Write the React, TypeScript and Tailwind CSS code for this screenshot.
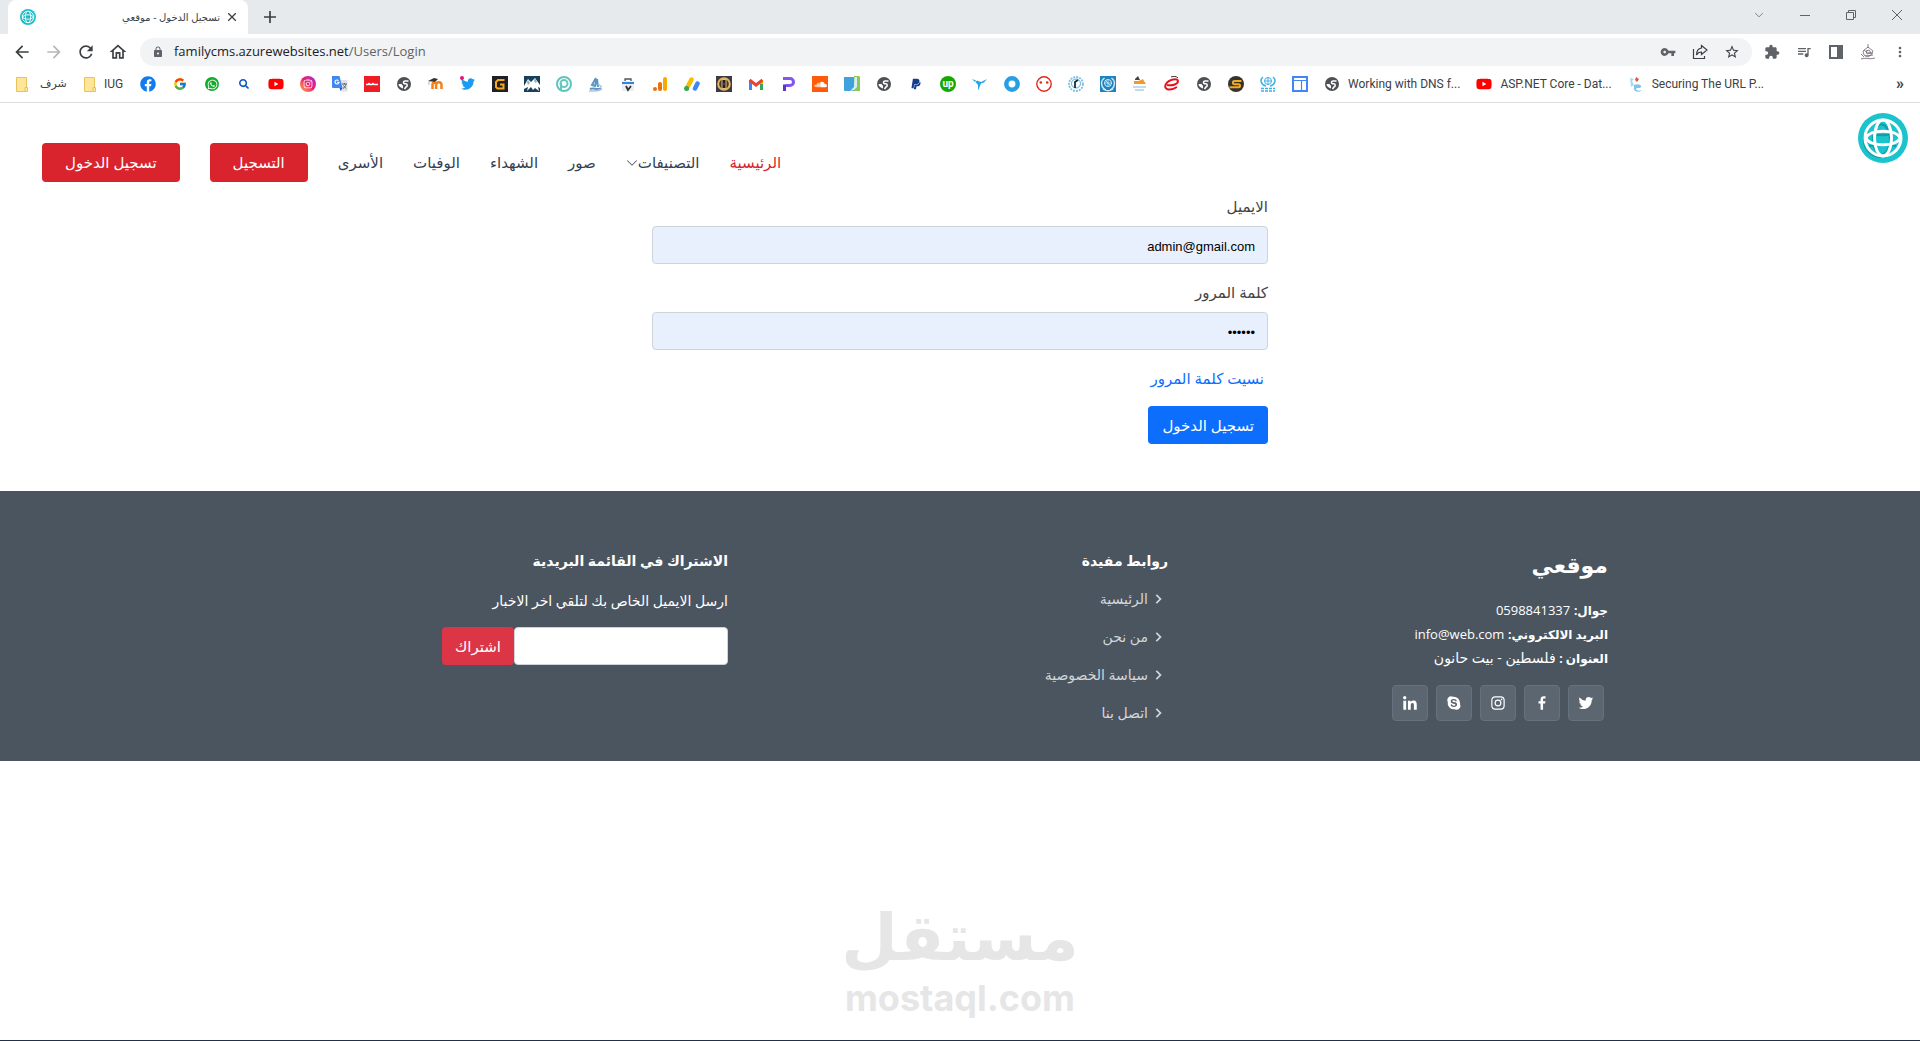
import {
  BiChevronRight,
  BiLogoFacebook,
  BiLogoInstagram,
  BiLogoLinkedin,
  BiLogoSkype,
  BiLogoTwitter,
} from "react-icons/bi";
import { BsChevronDown } from "react-icons/bs";
import {
  MdArrowBack,
  MdArrowForward,
  MdExtension,
  MdLock,
  MdMoreVert,
  MdOutlineHome,
  MdOutlineQueueMusic,
  MdRefresh,
  MdStarOutline,
  MdVpnKey,
} from "react-icons/md";
import {
  FaFacebook,
  FaInstagram,
  FaPaypal,
  FaSearch,
  FaSoundcloud,
  FaTwitter,
  FaWhatsapp,
  FaYoutube,
} from "react-icons/fa";
import { FcGoogle } from "react-icons/fc";

type FooterLink = { id: number; label: string };

const footerLinks: FooterLink[] = [
  { id: 1, label: "الرئيسية" },
  { id: 2, label: "من نحن" },
  { id: 3, label: "سياسة الخصوصية" },
  { id: 4, label: "اتصل بنا" },
];

const navLinks = ["صور", "الشهداء", "الوفيات", "الأسرى"];

const socials = [
  { name: "Twitter", icon: BiLogoTwitter },
  { name: "Facebook", icon: BiLogoFacebook },
  { name: "Instagram", icon: BiLogoInstagram },
  { name: "Skype", icon: BiLogoSkype },
  { name: "LinkedIn", icon: BiLogoLinkedin },
];

const SiteLogo = ({ className }: { className: string }) => (
  <svg viewBox="0 0 50 50" className={className} aria-hidden="true">
    <circle cx="25" cy="25" r="25" fill="#1bc4cd" />
    <circle cx="23" cy="27" r="18" fill="#0f9ea8" />
    <circle cx="25" cy="25" r="17" fill="#1bc4cd" />
    <g fill="none" stroke="#0f9ea8" strokeWidth="2">
      <ellipse cx="23.500" cy="26.500" rx="8.500" ry="15" />
      <path d="M10 19.500c8 3.500 22 3.500 29 0M10 33.500c8-3.500 22-3.500 28 0" />
    </g>
    <g fill="none" stroke="#fff" strokeWidth="3">
      <circle cx="25" cy="25" r="18" />
      <ellipse cx="25" cy="25" rx="8.500" ry="18" />
      <path d="M8 25c3-9 31-9 34 0M8 25c3 9 31 9 34 0" />
    </g>
  </svg>
);

const Folder = () => (
  <svg viewBox="0 0 12 15" className="h-[15px] w-3">
    <path d="M.5.5h10v14H.5z" fill="#ffe597" stroke="#e8c35b" />
    <path d="M9 10.500h2.500v4H9z" fill="#ffe9a6" stroke="#e8c35b" />
  </svg>
);

const Globe = () => (
  <svg viewBox="0 0 14 14" className="h-[14px] w-[14px]">
    <circle cx="7" cy="7" r="7" fill="#4d5156" />
    <path d="M11.500 4H8C6 4 6 6.500 7.500 6.800h1.500c1.800.4 1.500 2.700 0 3.200L7.500 12" fill="none" stroke="#fff" strokeWidth="1.500" />
    <path d="M1.500 7h3l1.500 2v2.500C3.500 11 1.500 9 1.500 7z" fill="#fff" />
  </svg>
);

const Youtube = () => <FaYoutube className="h-4 w-4 text-[#f00]" />;

const Emblem = ({ fill, stroke }: { fill: string; stroke: string }) => (
  <svg viewBox="0 0 16 16" className="h-4 w-4">
    <path d="M0 0h16v16H0z" fill={fill} />
    <g fill="none" stroke={stroke}>
      <path d="M4.500 2C0 5 1 12 6 14M11.500 2C16 5 15 12 10 14M3 13c3 2 7 2 10 0" strokeWidth="1.400" />
      <circle cx="8" cy="7" r="3.500" />
      <path d="M4.500 7h7M8 3.500v7M5.500 4.500l5 5" strokeWidth=".8" />
    </g>
  </svg>
);

const bookmarks = [
  { name: "Facebook", icon: <FaFacebook className="h-4 w-4 text-[#0f7bee]" /> },
  { name: "Google", icon: <FcGoogle className="h-[14px] w-[14px]" /> },
  {
    name: "WhatsApp",
    icon: (
      <span className="flex h-[14px] w-[14px] items-center justify-center rounded-full bg-[#12ad2b]">
        <FaWhatsapp className="h-[11px] w-[11px] text-white" />
      </span>
    ),
  },
  { name: "Search", icon: <FaSearch className="h-[10px] w-[10px] text-[#0b57c2]" /> },
  { name: "YouTube", icon: <Youtube /> },
  {
    name: "Instagram",
    icon: (
      <span className="flex h-4 w-4 items-center justify-center rounded-full bg-linear-to-tr from-[#ffa41b] via-[#f0146b] to-[#a20fd0]">
        <FaInstagram className="h-[10px] w-[10px] text-white" />
      </span>
    ),
  },
  {
    name: "Translate",
    icon: (
      <svg viewBox="0 0 16 16" className="h-4 w-4">
        <path d="M7 4h8.500v11.500H9z" fill="#dfe1e5" />
        <path d="M0 0h7.500l3 12H1a1 1 0 0 1-1-1z" fill="#4086f4" />
        <path d="M7.500 12h3l-2 3z" fill="#1b56c4" />
        <path d="M6.500 4.600A2 2 0 1 0 7 6.300H5" fill="none" stroke="#fff" strokeWidth="1.100" />
        <path d="M10 8h5M12.500 7v1M14 8c-.5 2-1.500 3.500-3 4.500M11.500 9.500l2.500 3" fill="none" stroke="#5f6368" />
      </svg>
    ),
  },
  {
    name: "News",
    icon: (
      <svg viewBox="0 0 16 16" className="h-4 w-4">
        <path d="M0 0h16v16H0z" fill="#ee1c25" />
        <path d="M2 8.500h2l1-1 1 1h2l1-1 1 1h4" fill="none" stroke="#fff" strokeWidth="1.500" />
      </svg>
    ),
  },
  { name: "Site", icon: <Globe /> },
  {
    name: "Moodle",
    icon: (
      <svg viewBox="0 0 16 16" className="h-4 w-4">
        <path d="M4.500 13V8.500a1.800 1.800 0 0 1 3.600 0V13M8.100 9a2.700 2.700 0 0 1 5.400 0v4" fill="none" stroke="#f98012" strokeWidth="2.500" />
        <path d="M0 5l6-3 4 1-3 3z" fill="#333" />
        <path d="M1 5v4" stroke="#999" strokeWidth=".7" />
      </svg>
    ),
  },
  {
    name: "Twitter",
    icon: (
      <span className="relative flex h-4 w-4 items-center justify-center">
        <FaTwitter className="h-[14px] w-[14px] text-[#1d9bf0]" />
        <span className="absolute top-0 left-0 h-1 w-1 rounded-full bg-[#e0147a]"></span>
      </span>
    ),
  },
  {
    name: "G",
    icon: (
      <svg viewBox="0 0 16 16" className="h-4 w-4">
        <path d="M0 0h16v16H0z" fill="#1f2026" />
        <path d="M12.500 4H6L4 6v5l1.500 1.500h6V8.500H8" fill="none" stroke="#f6a81c" strokeWidth="2" />
      </svg>
    ),
  },
  {
    name: "Mountain",
    icon: (
      <svg viewBox="0 0 16 16" className="h-4 w-4">
        <path d="M0 0h16v16H0z" fill="#174158" />
        <path d="M0 10l4-7 3 3 4-4 5 7v3l-2-1 1 4-4-3-2 2-2-3-4 4 1-4-4 2z" fill="#fff" />
        <path d="M3 6l1-2 2 3-2 2zM10 4l1-2 2 4-2 1z" fill="#9aacb6" />
      </svg>
    ),
  },
  {
    name: "Pay",
    icon: (
      <svg viewBox="0 0 16 16" className="h-4 w-4">
        <circle cx="8" cy="8" r="7" fill="none" stroke="#5ec4bc" strokeWidth="2" />
        <circle cx="8" cy="7.500" r="3.500" fill="none" stroke="#63c9c0" strokeWidth="2" />
        <path d="M5 7v7" stroke="#63c9c0" strokeWidth="2" />
      </svg>
    ),
  },
  {
    name: "Sail",
    icon: (
      <svg viewBox="0 0 16 16" className="h-4 w-4" fill="none">
        <path d="M8 2l-4 7 3 1 2-7 1 8M2 13c4-2 7 2 11-1" stroke="#5b93c2" strokeWidth="2" />
        <path d="M1 15c3 0 8 1 13-2M10 8l4 3" stroke="#a9c6de" strokeWidth="1.500" />
      </svg>
    ),
  },
  {
    name: "Store",
    icon: (
      <svg viewBox="0 0 16 16" className="h-4 w-4">
        <path d="M2 5h12v10H2z" fill="#eceff1" />
        <path d="M5 5V3h6v2" fill="none" stroke="#4c565c" strokeWidth="1.300" />
        <path d="M2 6h12v2H2z" fill="#2d86e5" />
        <path d="M6 10l2 4 3-4" fill="none" stroke="#333" strokeWidth="1.800" />
      </svg>
    ),
  },
  {
    name: "Analytics",
    icon: (
      <svg viewBox="0 0 16 16" className="h-4 w-4">
        <rect x="11" y="1" width="4" height="14" rx="2" fill="#f9ab00" />
        <rect x="6" y="6" width="4" height="9" rx="2" fill="#e8710a" />
        <circle cx="3" cy="13" r="2" fill="#e8710a" />
      </svg>
    ),
  },
  {
    name: "AdSense",
    icon: (
      <svg viewBox="0 0 16 16" className="h-4 w-4" strokeWidth="4.500" strokeLinecap="round">
        <path d="M7.500 3.500L3 12" stroke="#fbbc04" />
        <path d="M13.500 7.500L11 12.500" stroke="#4285f4" />
        <circle cx="2.600" cy="12.600" r="2.500" fill="#34a853" />
      </svg>
    ),
  },
  {
    name: "Coin",
    icon: (
      <svg viewBox="0 0 16 16" className="h-4 w-4">
        <path d="M0 0h16v16H0z" fill="#3c3b42" />
        <circle cx="8" cy="8" r="5.800" fill="#493b28" stroke="#e3b566" strokeWidth="2" />
        <path d="M6 3.500h4v9H6z" fill="#202128" stroke="#e5ba72" />
        <path d="M6 8h4" stroke="#77664c" />
      </svg>
    ),
  },
  {
    name: "Gmail",
    icon: (
      <svg viewBox="0 0 16 16" className="h-4 w-4" fill="none" strokeWidth="3">
        <path d="M2.500 14V4" stroke="#4285f4" />
        <path d="M13.500 14V4" stroke="#34a853" />
        <path d="M13.500 8V4" stroke="#fbbc04" />
        <path d="M1.500 4L8 9l6.500-5" stroke="#ea4335" />
      </svg>
    ),
  },
  {
    name: "P",
    icon: (
      <svg viewBox="0 0 16 16" className="h-4 w-4" fill="none">
        <path d="M3 2.500h7a3.200 3.200 0 0 1 0 7H5.500" stroke="#8156ec" strokeWidth="3" />
        <path d="M4.500 8.500V15" stroke="#5d35c9" strokeWidth="3" />
      </svg>
    ),
  },
  {
    name: "SoundCloud",
    icon: (
      <span className="flex h-4 w-4 items-center justify-center bg-[#ff5a0a]">
        <FaSoundcloud className="h-[13px] w-[13px] text-white" />
      </span>
    ),
  },
  {
    name: "Notes",
    icon: (
      <svg viewBox="0 0 16 16" className="h-4 w-4">
        <path d="M0 1h10v14H1a1 1 0 0 1-1-1z" fill="#3fa2dc" />
        <path d="M10 0h5l1 1v14h-6z" fill="#8ac858" />
        <path d="M10.500 1H13v10l-3 3-4 1 4-4z" fill="#d8edf7" />
      </svg>
    ),
  },
  { name: "Site", icon: <Globe /> },
  { name: "PayPal", icon: <FaPaypal className="h-3 w-3 text-[#123c8c]" /> },
  {
    name: "Upwork",
    icon: (
      <span className="flex h-4 w-4 items-center justify-center rounded-full bg-[#14a800] text-[10px] leading-none font-bold text-white">
        up
      </span>
    ),
  },
  {
    name: "Freelancer",
    icon: (
      <svg viewBox="0 0 16 16" className="h-4 w-4">
        <path d="M0 3l4 1.500L3 6zM5 4.500l4 1.500 6-3-3 3.500-3 1-3 7L6 9 3.500 6z" fill="#29a3e2" />
      </svg>
    ),
  },
  {
    name: "Ring",
    icon: (
      <svg viewBox="0 0 16 16" className="h-4 w-4">
        <circle cx="8" cy="8" r="5.700" fill="none" stroke="#26a0e2" strokeWidth="4.500" />
      </svg>
    ),
  },
  {
    name: "Face",
    icon: (
      <svg viewBox="0 0 16 16" className="h-4 w-4">
        <circle cx="8" cy="8" r="7.200" fill="#fff" stroke="#e5261f" strokeWidth="1.400" />
        <circle cx="4.800" cy="6.500" r="1.300" fill="#e5261f" />
        <circle cx="11.200" cy="6.500" r="1.300" fill="#e5261f" />
      </svg>
    ),
  },
  {
    name: "Relief",
    icon: (
      <svg viewBox="0 0 16 16" className="h-4 w-4" fill="none">
        <circle cx="8" cy="8" r="7" stroke="#7cc0e4" strokeWidth="1.800" strokeDasharray="2 1" />
        <circle cx="8" cy="7.500" r="4.500" stroke="#56abd9" />
        <path d="M7 12V6l3-2" stroke="#1a2b36" strokeWidth="1.800" />
      </svg>
    ),
  },
  { name: "UN", icon: <Emblem fill="#1f83bd" stroke="#d5ebf7" /> },
  {
    name: "Council",
    icon: (
      <svg viewBox="0 0 16 16" className="h-4 w-4">
        <path d="M3 3l3-3 1 2 1 2H3z" fill="#444" />
        <path d="M2 5h4l3-1 2-1 1 2 2 3H2z" fill="#f19a28" />
        <path d="M1 11h13M3 14h9" stroke="#86b9da" strokeWidth="1.200" />
      </svg>
    ),
  },
  {
    name: "E",
    icon: (
      <svg viewBox="0 0 16 16" className="h-4 w-4" fill="none">
        <path d="M3 9c6 1 11-1 11-4S5 3 2 8s3 8 11 3" stroke="#e3131b" strokeWidth="2" />
        <path d="M7 1c3-1 5-1 7 1" stroke="#333" />
      </svg>
    ),
  },
  { name: "Site", icon: <Globe /> },
  {
    name: "S",
    icon: (
      <svg viewBox="0 0 16 16" className="h-4 w-4">
        <circle cx="8" cy="8" r="8" fill="#36332f" />
        <path d="M13.500 5H6.500a1.500 1.500 0 0 0 0 3.200h4a1.500 1.500 0 0 1 0 3H1.500" fill="none" stroke="#f2aa21" strokeWidth="2" />
      </svg>
    ),
  },
  {
    name: "UN",
    icon: (
      <svg viewBox="0 0 16 16" className="h-4 w-4" fill="none" stroke="#3fb0e5">
        <path d="M3 1C-.5 4 1 9 6 10M13 1c3.500 3 2 8-3 9" strokeWidth="1.500" />
        <circle cx="8" cy="5" r="3.500" />
        <path d="M4.500 5h7M8 1.500v7" />
        <path d="M1 12.500h14M1 15h14" strokeWidth="1.600" strokeDasharray="3 1" />
      </svg>
    ),
  },
  {
    name: "Table",
    icon: (
      <svg viewBox="0 0 16 16" className="h-4 w-4" fill="none" stroke="#4285f4">
        <path d="M1 1h14v14H1z" strokeWidth="2" />
        <path d="M2 4.500h12M9.500 4.500V14" strokeWidth="1.200" />
      </svg>
    ),
  },
];

const labelled = [
  { icon: <Globe />, label: "Working with DNS f..." },
  { icon: <Youtube />, label: "ASP.NET Core - Dat..." },
  {
    icon: (
      <svg viewBox="0 0 16 16" className="h-4 w-4">
        <path d="M2 2l4 1-2 2 2 4-3 2z" fill="#a9d8f3" />
        <path d="M8 1l3 2-2 3-2-2z" fill="#e6533c" />
        <path d="M6 9c4-2 8 0 7 2s-5 0-5 2 4 2 6 1c-2 3-9 2-8-2z" fill="#7cc4ee" />
      </svg>
    ),
    label: "Securing The URL P...",
  },
];

const BrowserChrome = () => {
  return (
    <div className="bg-white font-['Open_Sans','DejaVu_Sans',sans-serif] text-[#3c4043]">
      <div className="flex h-[34px] items-center bg-[#e7eaed] pr-[18px] pl-2">
        <div className="flex h-full w-60 items-center rounded-t-lg bg-white px-3">
          <SiteLogo className="h-4 w-4" />
          <span dir="rtl" className="mr-2 flex-1 text-[10px]">تسجيل الدخول - موقعي</span>
          <button aria-label="Close tab">
            <svg viewBox="0 0 8 8" className="h-2 w-2" stroke="#3c4043" strokeWidth="1.300">
              <path d="M0 0l8 8M8 0L0 8" />
            </svg>
          </button>
        </div>
        <button aria-label="New tab" className="ml-4">
          <svg viewBox="0 0 12 12" className="h-3 w-3" stroke="#3c4043" strokeWidth="1.700">
            <path d="M6 0v12M0 6h12" />
          </svg>
        </button>
        <div className="mb-1 ml-auto flex items-center gap-9 text-[#5f6368]">
          <button aria-label="Search tabs">
            <BsChevronDown className="h-[10px] w-[10px]" />
          </button>
          <button aria-label="Minimize">
            <svg viewBox="0 0 10 10" className="h-[10px] w-[10px]" stroke="currentColor">
              <path d="M0 5.500h10" />
            </svg>
          </button>
          <button aria-label="Restore">
            <svg viewBox="0 0 10 10" className="h-[10px] w-[10px]" fill="none" stroke="currentColor">
              <path d="M.5 2.500h7v7h-7zM2.500 2.500v-2h7v7h-2" />
            </svg>
          </button>
          <button aria-label="Close">
            <svg viewBox="0 0 10 10" className="h-[10px] w-[10px]" stroke="currentColor">
              <path d="M0 0l10 10M10 0L0 10" />
            </svg>
          </button>
        </div>
      </div>
      <div className="flex h-9 items-center px-3 text-[#5f6368]">
        <div className="flex items-center gap-3 text-[#3c4043]">
          <button aria-label="Back"><MdArrowBack className="h-5 w-5" /></button>
          <button aria-label="Forward" className="text-[#b5b8bb]"><MdArrowForward className="h-5 w-5" /></button>
          <button aria-label="Reload"><MdRefresh className="h-5 w-5" /></button>
          <button aria-label="Home"><MdOutlineHome className="h-5 w-5" /></button>
        </div>
        <div className="ml-3 flex h-7 flex-1 items-center rounded-full bg-[#f1f3f4] px-3">
          <MdLock className="h-3 w-3" />
          <p className="ml-[10px] flex-1 text-[13px] text-[#5f6368]">
            <span className="text-[#202124]">familycms.azurewebsites.net</span>/Users/Login
          </p>
          <div className="flex items-center gap-4">
            <button aria-label="Passwords"><MdVpnKey className="h-4 w-4" /></button>
            <button aria-label="Share">
              <svg viewBox="0 0 16 16" className="h-4 w-4" fill="none" stroke="#3c4043" strokeWidth="1.200">
                <path d="M1.500 5v9.500h11V12M9.500 1.500L15 6l-5.500 4.500V8C7 8 5.500 9 4.500 11c0-4 2-6.500 5-7z" />
              </svg>
            </button>
            <button aria-label="Bookmark"><MdStarOutline className="h-4 w-4 text-[#3c4043]" /></button>
          </div>
        </div>
        <div className="ml-3 flex items-center gap-4">
          <button aria-label="Extensions"><MdExtension className="h-4 w-4" /></button>
          <button aria-label="Media"><MdOutlineQueueMusic className="h-4 w-4" /></button>
          <button aria-label="Side panel">
            <svg viewBox="0 0 16 16" className="h-4 w-4">
              <path d="M1 1h14v14H1zM3 3v10h6V3z" fill="#5f6368" fillRule="evenodd" />
            </svg>
          </button>
          <button aria-label="Profile">
            <svg viewBox="0 0 16 16" className="h-4 w-4" fill="none" stroke="#6d6570" strokeWidth=".8">
              <path d="M8 0v4M3 7l5-4 5 4-2 4-3 2-4-2zM4 6c3 3 6 3 9 3M1 10l3 3M1 15c4-2 8 1 14-1M6 7l3-1 2 3-4 1zM5 12l8-1" />
            </svg>
          </button>
          <button aria-label="Menu"><MdMoreVert className="h-4 w-4" /></button>
        </div>
      </div>
      <div className="flex h-[33px] items-center gap-4 border-b border-[#dadce0] px-4 pb-1 font-['Roboto','DejaVu_Sans',sans-serif] text-[12px]">
        <a href="#" className="flex items-center gap-3">
          <Folder />
          <span className="w-6 text-[11px]">شرف</span>
        </a>
        <a href="#" className="ml-1 flex items-center gap-2">
          <Folder />
          <span className="w-5">IUG</span>
        </a>
        {bookmarks.map((item, index) => (
          <a key={index} href="#" aria-label={item.name} className="flex w-4 shrink-0 items-center justify-center">
            {item.icon}
          </a>
        ))}
        {labelled.map((item) => (
          <a key={item.label} href="#" className="flex items-center gap-2 whitespace-nowrap">
            <span className="flex w-4 justify-center">{item.icon}</span>
            {item.label}
          </a>
        ))}
        <button aria-label="More bookmarks" className="ml-auto text-[16px] leading-none font-bold">»</button>
      </div>
    </div>
  );
};

const Header = () => {
  return (
    <header className="flex items-start justify-between pr-3 pl-[42px]">
      <a href="#" aria-label="موقعي" className="mt-[10px]">
        <SiteLogo className="h-[50px] w-[50px]" />
      </a>
      <nav className="mt-10 flex items-center gap-[30px] text-[15px] text-[#344054]">
        <a href="#" className="text-[#d9232d]">الرئيسية</a>
        <a href="#" className="flex items-center">
          التصنيفات
          <BsChevronDown className="h-3 w-3" />
        </a>
        {navLinks.map((link) => (
          <a key={link} href="#">{link}</a>
        ))}
        <a href="#" className="rounded bg-[#d9232d] px-[23px] py-2 leading-[23px] text-white">التسجيل</a>
        <a href="#" className="rounded bg-[#d9232d] px-[23px] py-2 leading-[23px] text-white">تسجيل الدخول</a>
      </nav>
    </header>
  );
};

const LoginForm = () => {
  return (
    <form className="mx-auto w-1/3 px-3 pt-3 pb-[47px] text-[15px] leading-6">
      <label htmlFor="email" className="mb-2 block">الايميل</label>
      <input
        id="email"
        type="text"
        defaultValue="admin@gmail.com"
        className="mb-4 block h-[38px] w-full rounded border border-[#ced4da] bg-[#e8f0fe] px-3 pt-0.5 font-['Liberation_Sans',sans-serif] text-[13px] text-black"
      />
      <label htmlFor="password" className="mb-2 block">كلمة المرور</label>
      <input
        id="password"
        type="password"
        defaultValue="123456"
        className="mb-4 block h-[38px] w-full rounded border border-[#ced4da] bg-[#e8f0fe] px-3 pt-0.5 font-['Liberation_Sans',sans-serif] text-[13px] text-black"
      />
      <a href="#" className="mb-4 block px-1 text-[#0d6efd]">نسيت كلمة المرور</a>
      <button type="button" className="block h-[38px] rounded bg-[#0d6efd] px-[14px] text-white">تسجيل الدخول</button>
    </form>
  );
};

const Footer = () => {
  return (
    <footer className="bg-[#4a5560] text-[14px] leading-6 text-white">
      <div className="mx-auto grid max-w-[1320px] grid-cols-3 pt-[58px] pb-9">
        <div className="px-3">
          <h3 className="mb-[19px] text-[22px] leading-[30px] font-bold">موقعي</h3>
          <p>
            <strong className="text-[12px] leading-none">جوال:</strong>{" "}
            <span className="text-[13px] leading-none">0598841337</span>
            <br />
            <strong className="text-[12px] leading-none">البريد الالكتروني:</strong>{" "}
            <span className="text-[13px] leading-none">info@web.com</span>
            <br />
            <strong className="text-[12px] leading-none">العنوان :</strong> فلسطين - بيت حانون
          </p>
          <div className="mt-[15px] flex gap-2 px-1">
            {socials.map(({ name, icon: Icon }) => (
              <a
                key={name}
                href="#"
                aria-label={name}
                className="flex h-9 w-9 items-center justify-center rounded border border-[#67717c] bg-[#5c6671]"
              >
                <Icon className="h-[18px] w-[18px]" />
              </a>
            ))}
          </div>
        </div>
        <div className="px-3">
          <h4 className="mb-[14px] text-[14px] font-bold">روابط مفيدة</h4>
          <ul className="flex flex-col gap-[14px] text-[#d3d7db]">
            {footerLinks.map((link) => (
              <li key={link.id} className="flex items-center">
                <BiChevronRight className="h-5 w-5" />
                <a href="#">{link.label}</a>
              </li>
            ))}
          </ul>
        </div>
        <div className="px-3">
          <h4 className="mb-4 text-[14px] font-bold">الاشتراك في القائمة البريدية</h4>
          <p className="mb-[14px]">ارسل الايميل الخاص بك لتلقي اخر الاخبار</p>
          <form className="flex">
            <input
              type="email"
              aria-label="الايميل"
              className="h-[38px] w-[214px] rounded border border-[#ced4da] bg-white px-3 text-black"
            />
            <button type="button" className="h-[38px] w-[72px] rounded bg-[#dc3545] text-[15px]">اشتراك</button>
          </form>
        </div>
      </div>
    </footer>
  );
};

const App: React.FC = () => {
  return (
    <div className="flex min-h-screen flex-col border-b border-[#22304a] bg-white">
      <BrowserChrome />
      <div dir="rtl" className="font-['Open_Sans','DejaVu_Sans',sans-serif] text-[#444]">
        <Header />
        <LoginForm />
        <Footer />
      </div>
      <div className="mt-auto flex flex-col items-center pb-5 text-[#e6e6e6]">
        <span dir="rtl" className="font-['DejaVu_Sans',sans-serif] text-[65px] leading-[76px] font-bold">مستقل</span>
        <span className="font-['Inter',sans-serif] text-[36px] leading-11 font-bold">mostaql.com</span>
      </div>
    </div>
  );
};

export default App;
